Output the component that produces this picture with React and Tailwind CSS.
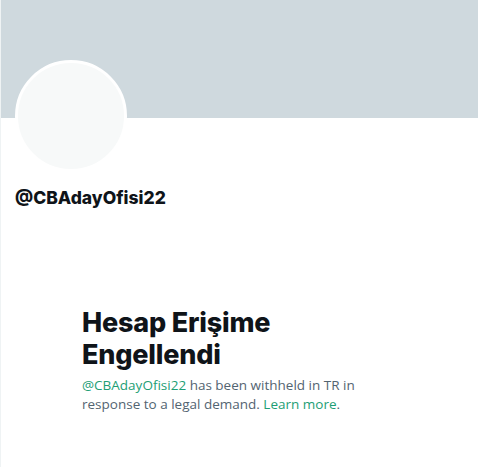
export default function App() {
  return (
    <div className="min-h-[467px] w-[478px] bg-white border-l border-[#eff3f4] font-['Inter',sans-serif]">
      {/* banner */}
      <div className="h-[118px] bg-[#cfd9de]" />

      {/* avatar + handle */}
      <div className="px-[14px]">
        <div className="-mt-[58px] w-[112px] h-[112px] rounded-full border-[3px] border-white bg-[#f7f9f9]" />
        <div className="mt-[14px] text-[17.5px] leading-[24px] font-extrabold text-[#0f1419]">
          @CBAdayOfisi22
        </div>
      </div>

      {/* withheld message */}
      <div className="ml-[81px] w-[282px] pt-[97px]">
        <h2 className="text-[27px] leading-[32px] font-extrabold tracking-[-0.2px] text-[#0f1419]">
          Hesap Erişime Engellendi
        </h2>
        <p className="mt-[5px] text-[13.5px] leading-[19px] text-[#536471] font-['Open_Sans',sans-serif]">
          <span className="text-[#1d9e75]">@CBAdayOfisi22</span> has been withheld in TR in response to a legal demand.{" "}
          <span className="text-[#1d9e75]">Learn more</span>.
        </p>
      </div>
    </div>
  );
}
